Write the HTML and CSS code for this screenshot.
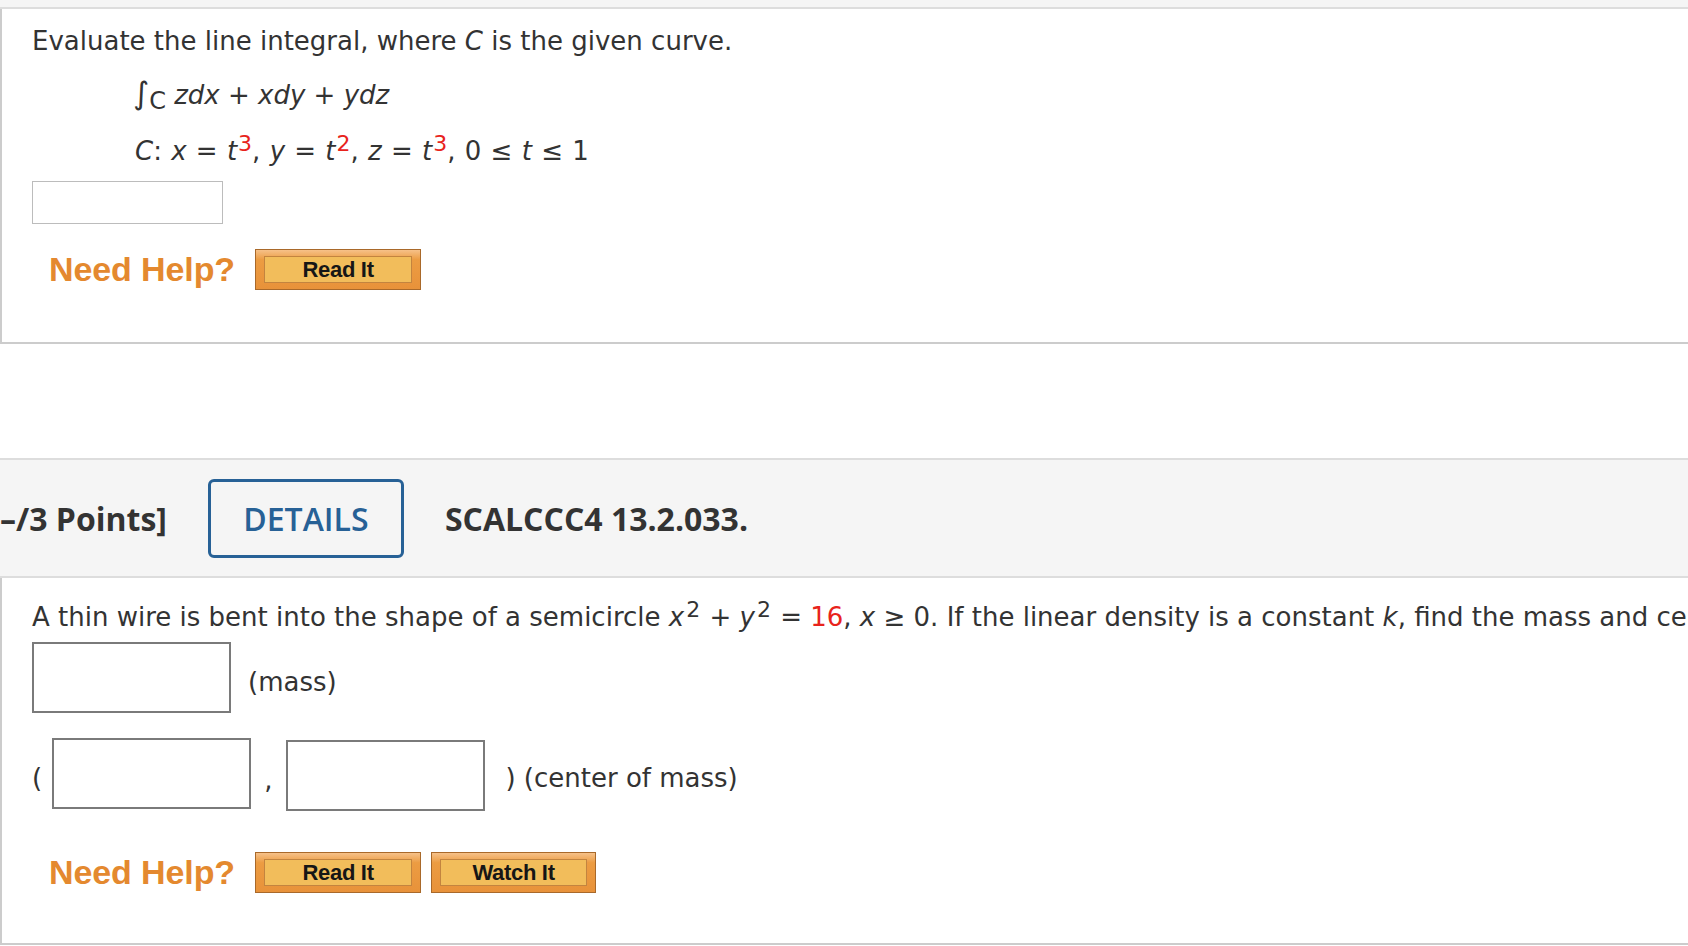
FILE: index.html
```html
<!DOCTYPE html>
<html lang="en">
<head>
<meta charset="utf-8">
<title>Line integral questions</title>
<link rel="stylesheet" href="styles.css">
</head>
<body>
<div class="strip"></div>

<section class="card card-1">
  <p class="prompt">Evaluate the line integral, where <i>C</i> is the given curve.</p>
  <p class="math math-int"><span class="int">∫</span><span class="sub">C</span> <i>zdx</i> + <i>xdy</i> + <i>ydz</i></p>
  <p class="math math-curve"><i>C</i>: <i>x</i> = <i>t</i><sup class="red">3</sup>, <i>y</i> = <i>t</i><sup class="red">2</sup>, <i>z</i> = <i>t</i><sup class="red">3</sup>, 0 ≤ <i>t</i> ≤ 1</p>
  <div class="answer answer-light"></div>
  <div class="help">
    <span class="need">Need Help?</span>
    <span class="btn"><span class="btn-face">Read It</span></span>
  </div>
</section>

<div class="gap"></div>

<header class="qhead">
  <span class="points">–/3 Points]</span>
  <span class="details">DETAILS</span>
  <span class="code">SCALCCC4 13.2.033.</span>
</header>

<section class="card card-2">
  <p class="prompt">A thin wire is bent into the shape of a semicircle <i>x</i><sup class="sq">2</sup> + <i>y</i><sup class="sq">2</sup> = <span class="red">16</span>, <i>x</i> ≥ 0. If the linear density is a constant <i>k</i>, find the mass and center of mass of the wire.</p>
  <div class="row row-mass">
    <div class="answer"></div>
    <span class="label">(mass)</span>
  </div>
  <div class="row row-center">
    <span class="paren">(</span>
    <div class="answer"></div>
    <span class="comma">,</span>
    <div class="answer answer-low"></div>
    <span class="label">) (center of mass)</span>
  </div>
  <div class="help help-2">
    <span class="need">Need Help?</span>
    <span class="btn"><span class="btn-face">Read It</span></span>
    <span class="btn"><span class="btn-face">Watch It</span></span>
  </div>
</section>
</body>
</html>
```

FILE: styles.css
```css
html, body {
  margin: 0;
  padding: 0;
  background: #ffffff;
  overflow: hidden;
}

body {
  font-family: "DejaVu Sans", Verdana, sans-serif;
  font-size: 26px;
  color: #333333;
  width: 1688px;
  height: 946px;
}

.strip {
  height: 7px;
  background: #f5f5f5;
  border-bottom: 2px solid #dddddd;
}

.card {
  border-left: 2px solid #cccccc;
  border-bottom: 2px solid #cccccc;
  padding-left: 30px;
  white-space: nowrap;
  overflow: hidden;
}

.card-1 {
  padding-top: 16px;
  padding-bottom: 52px;
}

.card-2 {
  padding-top: 23px;
  padding-bottom: 50px;
}

p {
  margin: 0;
  line-height: 32px;
}

i {
  font-style: italic;
}

.math {
  padding-left: 103px;
}

.math-int {
  margin-top: 20px;
}

.math-curve {
  margin-top: 23px;
  word-spacing: 1px;
}

.int {
  font-size: 31px;
  margin-left: -2px;
}

.sub {
  font-size: 24px;
  position: relative;
  top: 5px;
}

sup {
  font-size: 22px;
  line-height: 0;
  vertical-align: 9px;
  margin-left: 1px;
}

sup.sq {
  margin-left: 2px;
  margin-right: 1px;
}

.red {
  color: #e8231c;
}

.answer {
  box-sizing: border-box;
  width: 199px;
  height: 71px;
  border: 2px solid #7a7a7a;
  background: #ffffff;
  flex: none;
}

.answer-light {
  width: 191px;
  height: 43px;
  border: 1px solid #bcbcbc;
  margin-top: 14px;
}

.help {
  display: flex;
  align-items: center;
  gap: 10px;
  margin-top: 25px;
  padding-left: 17px;
}

.help-2 {
  margin-top: 43px;
}

.need {
  font-family: "Liberation Sans", Arial, sans-serif;
  font-weight: bold;
  font-size: 34px;
  color: #e4892f;
  margin-right: 10px;
  letter-spacing: -0.1px;
}

.btn {
  box-sizing: border-box;
  display: flex;
  width: 166px;
  height: 41px;
  padding: 6px 8px;
  border: 1px solid #a9692a;
  background: linear-gradient(#f6c189 0%, #ec9c42 25%, #e8923a 100%);
}

.btn + .btn {
  width: 165px;
}

.btn-face {
  flex: 1;
  display: flex;
  align-items: center;
  justify-content: center;
  border: 1px solid #c3843f;
  background: #f2bd5b;
  font-family: "Liberation Sans", Arial, sans-serif;
  font-weight: bold;
  font-size: 22px;
  color: #161616;
  letter-spacing: -0.3px;
}

.gap {
  height: 114px;
}

.qhead {
  display: flex;
  align-items: center;
  gap: 41px;
  height: 116px;
  background: #f5f5f5;
  border-top: 2px solid #dddddd;
  border-bottom: 2px solid #dddddd;
  font-family: "Open Sans", sans-serif;
  font-size: 32px;
  color: #333333;
  white-space: nowrap;
}

.points,
.code {
  font-weight: 700;
}

.details {
  box-sizing: border-box;
  width: 196px;
  height: 79px;
  border: 3px solid #276196;
  border-radius: 6px;
  display: flex;
  align-items: center;
  justify-content: center;
  font-size: 32px;
  font-weight: 600;
  color: #276196;
}

.row {
  display: flex;
  align-items: center;
}

.row-mass {
  margin-top: 9px;
}

.row-center {
  margin-top: 25px;
}

.label {
  margin-left: 17px;
  padding-top: 9px;
}

.paren {
  margin-right: 10px;
  padding-top: 9px;
}

.comma {
  margin: 0 14px 0 13px;
  position: relative;
  top: 6px;
}

.answer-low {
  position: relative;
  top: 2px;
}

.row-center .label {
  margin-left: 20px;
}
```
